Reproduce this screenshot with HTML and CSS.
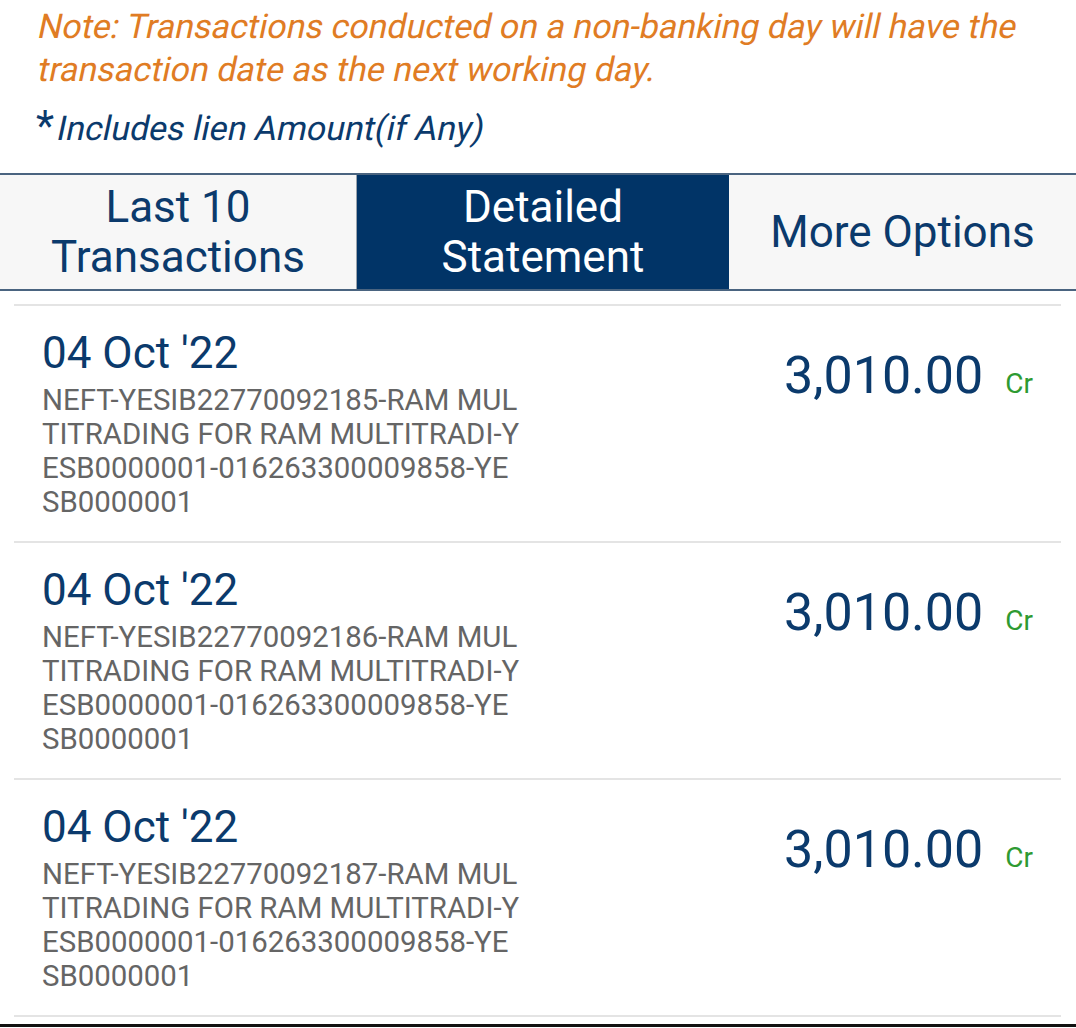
FILE: index.html
```html
<!DOCTYPE html>
<html lang="en">
<head>
    <meta charset="UTF-8">
    <meta name="viewport" content="width=device-width, initial-scale=1.0">
    <title>Account Statement</title>
    <link rel="stylesheet" href="styles.css">
</head>
<body>

    <div class="notes">
        <p class="note">
            <span class="slant">Note: Transactions conducted on a non-banking day will have the</span>
            <span class="slant">transaction date as the next working day.</span>
        </p>
        <p class="lien"><span class="star">*</span><span class="slant">Includes lien Amount(if Any)</span></p>
    </div>

    <div class="tabs">
        <div class="tab">Last 10<br>Transactions</div>
        <div class="tab active">Detailed<br>Statement</div>
        <div class="tab">More Options</div>
    </div>

    <ul class="txn-list">
        <li class="txn">
            <div class="txn-info">
                <div class="txn-date">04 Oct '22</div>
                <div class="txn-desc">NEFT-YESIB22770092185-RAM MUL<br>TITRADING FOR RAM MULTITRADI-Y<br>ESB0000001-016263300009858-YE<br>SB0000001</div>
            </div>
            <div class="txn-amount">3,010.00<span class="cr">Cr</span></div>
        </li>
        <li class="txn">
            <div class="txn-info">
                <div class="txn-date">04 Oct '22</div>
                <div class="txn-desc">NEFT-YESIB22770092186-RAM MUL<br>TITRADING FOR RAM MULTITRADI-Y<br>ESB0000001-016263300009858-YE<br>SB0000001</div>
            </div>
            <div class="txn-amount">3,010.00<span class="cr">Cr</span></div>
        </li>
        <li class="txn">
            <div class="txn-info">
                <div class="txn-date">04 Oct '22</div>
                <div class="txn-desc">NEFT-YESIB22770092187-RAM MUL<br>TITRADING FOR RAM MULTITRADI-Y<br>ESB0000001-016263300009858-YE<br>SB0000001</div>
            </div>
            <div class="txn-amount">3,010.00<span class="cr">Cr</span></div>
        </li>
    </ul>

    <div class="bottom-edge"></div>

</body>
</html>
```

FILE: styles.css
```css
body {
    font-family: Roboto, 'Noto Sans', sans-serif;
    background-color: #ffffff;
    margin: 0;
    color: #0b3a6c;
}

.notes {
    padding: 5px 10px 0 36px;
}

/* the app slants the regular face instead of using a true italic */
.slant {
    display: inline-block;
    transform: skewX(-12deg);
    transform-origin: 0 80%;
    white-space: nowrap;
}

.note {
    margin: 0;
    font-size: 34px;
    line-height: 43px;
    color: #e07c24;
}

.note .slant {
    display: block;
}

.lien {
    margin: 14px 0 0;
    font-size: 34px;
    line-height: 43px;
    color: #0b3a6c;
}

.star {
    font-size: 42px;
    line-height: 1;
    margin-right: 1px;
}

.tabs {
    display: flex;
    margin-top: 23px;
    border-top: 2px solid #4a6480;
    border-bottom: 2px solid #4a6480;
    background-color: #f7f7f7;
}

.tab {
    display: flex;
    align-items: center;
    justify-content: center;
    height: 114px;
    text-align: center;
    font-size: 44px;
    line-height: 50px;
    color: #0b3a6c;
}

.tab:nth-child(1) {
    width: 357px;
    border-right: 1px solid #9aa3ad;
    box-sizing: border-box;
}

.tab:nth-child(2) {
    width: 372px;
}

.tab:nth-child(3) {
    flex: 1;
}

.tab.active {
    background-color: #013467;
    color: #ffffff;
}

.txn-list {
    list-style-type: none;
    margin: 13px 15px 0 14px;
    padding: 0;
    border-top: 2px solid #e4e4e4;
}

.txn {
    display: flex;
    justify-content: space-between;
    align-items: flex-start;
    padding: 22px 28px 22px 28px;
    border-bottom: 2px solid #e4e4e4;
}

.txn-date {
    font-size: 44px;
    line-height: 50px;
    color: #0b3a6c;
}

.txn-desc {
    margin-top: 5px;
    font-size: 29.4px;
    line-height: 34px;
    color: #656565;
}

.txn-amount {
    margin-top: 18px;
    font-size: 52px;
    line-height: 60px;
    color: #0b3a6c;
}

.cr {
    margin-left: 22px;
    font-size: 28px;
    color: #2e9a32;
}

.bottom-edge {
    margin-top: 7px;
    height: 3px;
    background-color: #111111;
}
```
